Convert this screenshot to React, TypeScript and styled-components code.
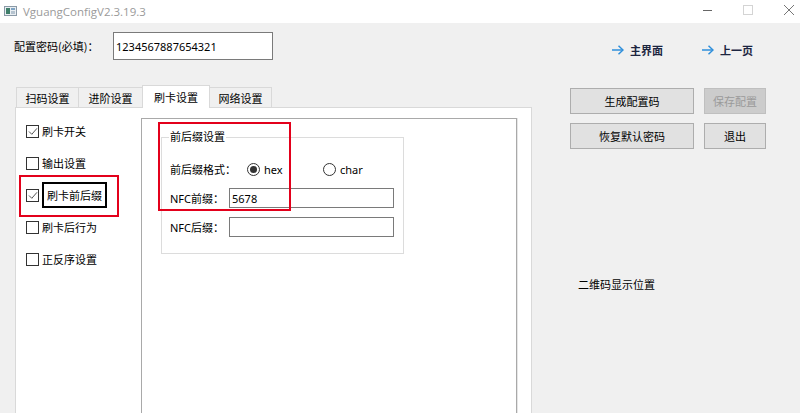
import React from "react";
import styled, { createGlobalStyle } from "styled-components";

const GlobalStyle = createGlobalStyle`
  html, body { margin: 0; padding: 0; }
  body {
    background: #f0f0f0;
    font-family: "Noto Sans", "Noto Sans CJK SC", sans-serif;
    font-size: 11px;
    color: #000;
    overflow: hidden;
  }
  * { box-sizing: border-box; }
`;

const Window = styled.div`
  width: 800px;
  height: 413px;
  display: flex;
  flex-direction: column;
  overflow: hidden;
  background: #f0f0f0;
`;

const TitleBar = styled.div`
  height: 23px;
  flex: none;
  background: #fff;
  display: flex;
  align-items: center;
  padding-left: 4px;
  overflow: hidden;
`;

const AppIcon = styled.svg`
  width: 13px;
  height: 10px;
  margin-right: 6px;
  margin-top: -1px;
`;

const Title = styled.span`
  font-family: "Open Sans", "Noto Sans", sans-serif;
  font-size: 11.5px;
  color: #9a9a9a;
`;

const WinControls = styled.div`
  margin-left: auto;
  margin-right: -10px;
  display: flex;
  height: 100%;
`;

const ControlBtn = styled.div<{ $w: number }>`
  width: ${(p) => p.$w}px;
  height: 100%;
  display: flex;
  align-items: center;
  justify-content: center;
  padding-bottom: 3px;
`;

const Body = styled.div`
  flex: 1;
  display: flex;
  flex-direction: column;
  min-height: 0;
`;

const TopRow = styled.div`
  height: 63px;
  flex: none;
  display: flex;
  align-items: flex-start;
  padding: 9px 0 0 14px;
`;

const FieldLabel = styled.div`
  width: 99px;
  line-height: 28px;
  font-family: "Noto Sans CJK SC", sans-serif;
`;

const PasswordInput = styled.input`
  width: 160px;
  height: 28px;
  border: 1px solid #7a7a7a;
  background: #fff;
  font-family: "Noto Sans", sans-serif;
  font-size: 11px;
  padding: 0 2px;
  color: #000;
  outline: none;
`;

const NavLinks = styled.div`
  display: flex;
  gap: 39px;
  margin-left: 339px;
  margin-top: 11px;
  height: 14px;
`;

const NavLink = styled.div`
  display: flex;
  align-items: center;
  gap: 6px;
  font-family: "Noto Sans CJK SC", sans-serif;
  font-weight: bold;
  color: #1c2540;
  line-height: 14px;
`;

const MainRow = styled.div`
  flex: none;
  display: flex;
  padding-left: 15px;
`;

const TabColumn = styled.div`
  width: 517px;
  display: flex;
  flex-direction: column;
`;

const TabBar = styled.div`
  height: 22px;
  display: flex;
  align-items: flex-end;
  padding-left: 1px;
  position: relative;
  z-index: 1;
  margin-bottom: -1px;
`;

const Tab = styled.div<{ $w: number; $active?: boolean; $first?: boolean }>`
  width: ${(p) => p.$w}px;
  height: ${(p) => (p.$active ? 23 : 21)}px;
  margin-left: ${(p) => (p.$first ? 0 : -1)}px;
  border: 1px solid #d9d9d9;
  border-bottom: ${(p) => (p.$active ? "none" : "1px solid #d9d9d9")};
  background: ${(p) => (p.$active ? "#fff" : "#f0f0f0")};
  display: flex;
  align-items: center;
  justify-content: center;
  font-family: "Noto Sans CJK SC", sans-serif;
  padding-top: ${(p) => (p.$active ? 0 : 1)}px;
`;

const TabPane = styled.div`
  height: 360px;
  background: #fff;
  border: 1px solid #d9d9d9;
  display: flex;
`;

const CheckList = styled.div`
  width: 125px;
  padding: 7px 0 0 10px;
  position: relative;
  display: flex;
  flex-direction: column;
`;

const CheckRow = styled.div`
  height: 32px;
  display: flex;
  align-items: center;
  font-family: "Noto Sans CJK SC", sans-serif;
`;

const CheckBox = styled.span`
  width: 13px;
  height: 13px;
  border: 1px solid #333;
  background: #fff;
  margin-right: 3px;
  display: flex;
  align-items: center;
  justify-content: center;
`;

const FocusText = styled.span`
  border: 2px solid #000;
  height: 26px;
  display: flex;
  align-items: center;
  padding: 0 3px;
`;

const Annotation = styled.div<{ $l: number; $t: number; $w: number; $h: number }>`
  position: absolute;
  left: ${(p) => p.$l}px;
  top: ${(p) => p.$t}px;
  width: ${(p) => p.$w}px;
  height: ${(p) => p.$h}px;
  border: 2px solid #e3001b;
  pointer-events: none;
`;

const ContentFrame = styled.div`
  flex: 1;
  margin: 10px 14px 0 0;
  border: 1px solid #a9a9a9;
  box-shadow: 1px 0 0 #e6e6e6;
  position: relative;
  padding: 18px 0 0 19px;
`;

const GroupBox = styled.div`
  width: 243px;
  border: 1px solid #dcdcdc;
  padding: 21px 0 16px 8px;
  position: relative;
  display: flex;
  flex-direction: column;
  gap: 9px;
  font-family: "Noto Sans CJK SC", sans-serif;
`;

const Legend = styled.div`
  position: absolute;
  top: -9px;
  left: 7px;
  background: #fff;
  padding: 0 1px;
  line-height: 14px;
`;

const FormRow = styled.div`
  display: flex;
  align-items: center;
  height: 20px;
`;

const RowLabel = styled.span<{ $w: number }>`
  width: ${(p) => p.$w}px;
  flex: none;
  font-family: "Noto Sans", "Noto Sans CJK SC", sans-serif;
`;

const RadioOption = styled.span`
  width: 76px;
  display: flex;
  align-items: center;
  gap: 4px;
  font-family: "Noto Sans", sans-serif;
`;

const RadioCircle = styled.span<{ $on?: boolean }>`
  width: 13px;
  height: 13px;
  border-radius: 50%;
  border: 1px solid #333;
  background: #fff;
  display: flex;
  align-items: center;
  justify-content: center;
  &::after {
    content: "";
    width: 7px;
    height: 7px;
    border-radius: 50%;
    background: ${(p) => (p.$on ? "#333" : "transparent")};
  }
`;

const TextField = styled.input`
  width: 165px;
  height: 20px;
  border: 1px solid #7a7a7a;
  font-family: "Noto Sans", sans-serif;
  font-size: 11px;
  padding: 0 2px;
  color: #000;
  outline: none;
  background: #fff;
`;

const SideColumn = styled.div`
  margin-left: 38px;
  padding-top: 2px;
  display: flex;
  flex-direction: column;
`;

const ButtonGrid = styled.div`
  display: grid;
  grid-template-columns: 124px 62px;
  grid-auto-rows: 26px;
  column-gap: 10px;
  row-gap: 9px;
`;

const Button = styled.button<{ $disabled?: boolean }>`
  background: ${(p) => (p.$disabled ? "#cccccc" : "#e1e1e1")};
  border: 1px solid ${(p) => (p.$disabled ? "#bfbfbf" : "#adadad")};
  color: ${(p) => (p.$disabled ? "#9a9a9a" : "#000")};
  font-family: "Noto Sans CJK SC", sans-serif;
  font-size: 11px;
  padding: 0;
`;

const QrLabel = styled.div`
  margin: 128px 0 0 8px;
  line-height: 14px;
  font-family: "Noto Sans CJK SC", sans-serif;
`;

const Check = () => (
  <svg width="10" height="9" viewBox="0 0 10 9">
    <polyline points="1,4.5 3.8,7.3 9,1.3" fill="none" stroke="#444" strokeWidth="0.9" />
  </svg>
);

const Arrow = () => (
  <svg width="12" height="10" viewBox="0 0 12 10">
    <line x1="0" y1="5" x2="11" y2="5" stroke="#2f8fdb" strokeWidth="1.5" />
    <polyline points="6.5,0.8 11,5 6.5,9.2" fill="none" stroke="#2f8fdb" strokeWidth="1.5" />
  </svg>
);

const checks = [
  { label: "刷卡开关", on: true },
  { label: "输出设置", on: false },
  { label: "刷卡前后缀", on: true, focus: true },
  { label: "刷卡后行为", on: false },
  { label: "正反序设置", on: false },
];

const tabs = [
  { label: "扫码设置", w: 63 },
  { label: "进阶设置", w: 65 },
  { label: "刷卡设置", w: 68, active: true },
  { label: "网络设置", w: 63 },
];

export default function App() {
  return (
    <>
      <GlobalStyle />
      <Window>
        <TitleBar>
          <AppIcon viewBox="0 0 13 10">
            <rect x="0.5" y="0.5" width="12" height="9" fill="#e9eef2" stroke="#8a99a6" />
            <rect x="2" y="2" width="4" height="6" fill="#3f7f6a" />
            <rect x="7" y="2" width="4" height="2" fill="#7fa4c4" />
            <rect x="7" y="5" width="4" height="3" fill="#b5c3cf" />
          </AppIcon>
          <Title>VguangConfigV2.3.19.3</Title>
          <WinControls>
            <ControlBtn $w={40}>
              <svg width="10" height="10" viewBox="0 0 10 10">
                <line x1="0" y1="5.5" x2="9" y2="5.5" stroke="#666" strokeWidth="1" />
              </svg>
            </ControlBtn>
            <ControlBtn $w={40}>
              <svg width="10" height="10" viewBox="0 0 10 10">
                <rect x="0.5" y="0.5" width="9" height="9" fill="none" stroke="#d4d4d4" />
              </svg>
            </ControlBtn>
            <ControlBtn $w={42}>
              <svg width="10" height="10" viewBox="0 0 10 10">
                <line x1="0" y1="0" x2="10" y2="10" stroke="#777" strokeWidth="1" />
                <line x1="10" y1="0" x2="0" y2="10" stroke="#777" strokeWidth="1" />
              </svg>
            </ControlBtn>
          </WinControls>
        </TitleBar>
        <Body>
          <TopRow>
            <FieldLabel>配置密码(必填)：</FieldLabel>
            <PasswordInput defaultValue="1234567887654321" readOnly />
            <NavLinks>
              <NavLink>
                <Arrow />
                主界面
              </NavLink>
              <NavLink>
                <Arrow />
                上一页
              </NavLink>
            </NavLinks>
          </TopRow>
          <MainRow>
            <TabColumn>
              <TabBar>
                {tabs.map((t, i) => (
                  <Tab key={t.label} $w={t.w} $active={t.active} $first={i === 0}>
                    {t.label}
                  </Tab>
                ))}
              </TabBar>
              <TabPane>
                <CheckList>
                  {checks.map((c) => (
                    <CheckRow key={c.label}>
                      <CheckBox>{c.on && <Check />}</CheckBox>
                      {c.focus ? <FocusText>{c.label}</FocusText> : <span>{c.label}</span>}
                    </CheckRow>
                  ))}
                  <Annotation $l={3} $t={67} $w={100} $h={42} />
                </CheckList>
                <ContentFrame>
                  <GroupBox>
                    <Legend>前后缀设置</Legend>
                    <FormRow>
                      <RowLabel $w={77}>前后缀格式：</RowLabel>
                      <RadioOption>
                        <RadioCircle $on />
                        hex
                      </RadioOption>
                      <RadioOption>
                        <RadioCircle />
                        char
                      </RadioOption>
                    </FormRow>
                    <FormRow>
                      <RowLabel $w={59}>NFC前缀：</RowLabel>
                      <TextField defaultValue="5678" readOnly />
                    </FormRow>
                    <FormRow>
                      <RowLabel $w={59}>NFC后缀：</RowLabel>
                      <TextField defaultValue="" readOnly />
                    </FormRow>
                  </GroupBox>
                  <Annotation $l={16} $t={3} $w={133} $h={89} />
                </ContentFrame>
              </TabPane>
            </TabColumn>
            <SideColumn>
              <ButtonGrid>
                <Button>生成配置码</Button>
                <Button $disabled>保存配置</Button>
                <Button>恢复默认密码</Button>
                <Button>退出</Button>
              </ButtonGrid>
              <QrLabel>二维码显示位置</QrLabel>
            </SideColumn>
          </MainRow>
        </Body>
      </Window>
    </>
  );
}
